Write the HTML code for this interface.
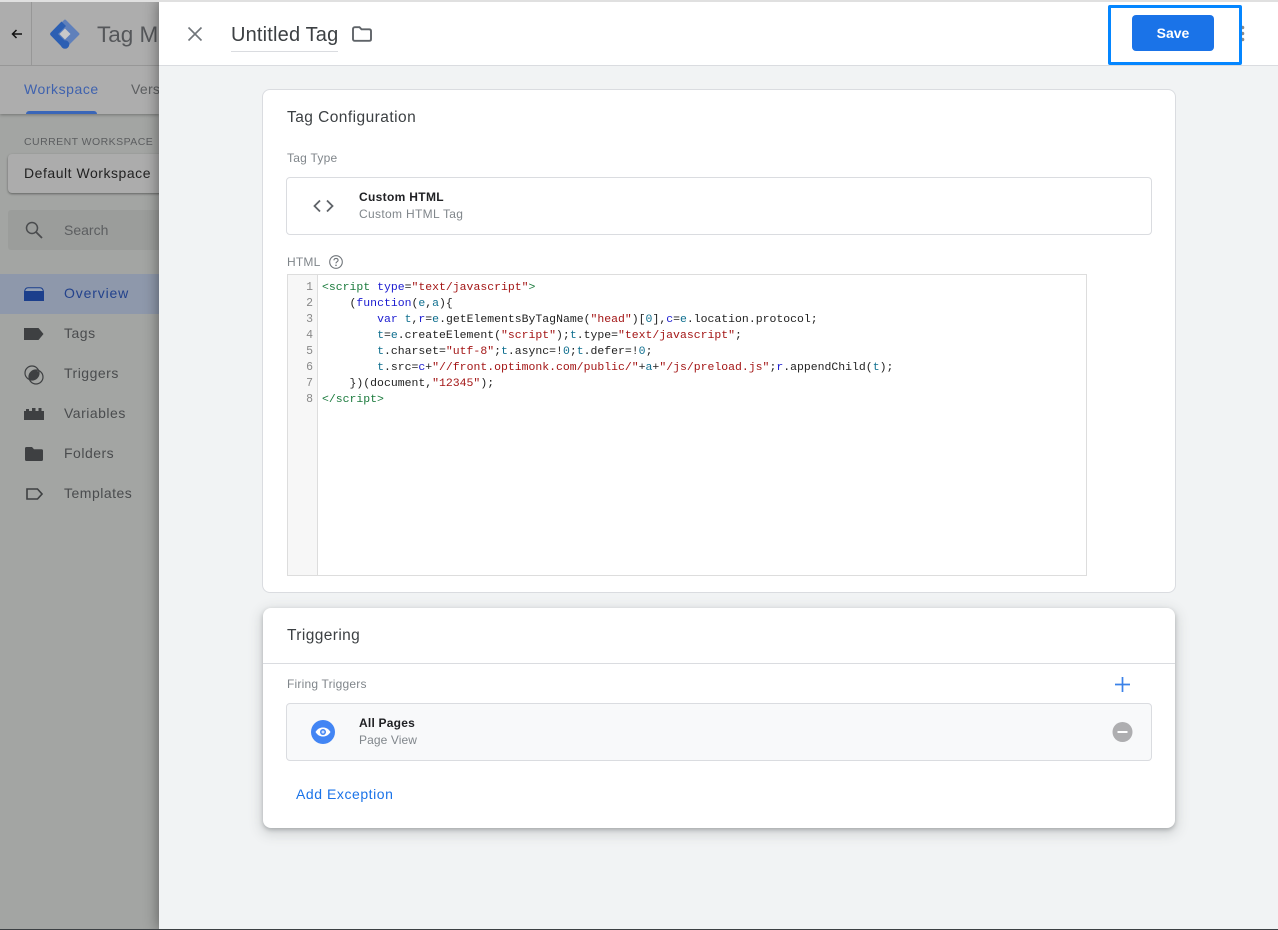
<!DOCTYPE html>
<html lang="en">
<head>
<meta charset="utf-8">
<title>Untitled Tag</title>
<style>
html,body{margin:0;padding:0;width:1278px;height:930px;overflow:hidden;background:#a3a5a3;font-family:"Liberation Sans",sans-serif;}
.a{position:absolute;white-space:nowrap;}
#root{position:absolute;left:0;top:0;width:1278px;height:930px;overflow:hidden;}
.nav{font-size:14px;color:#4a4c4e;left:64px;letter-spacing:.5px;}
.code{font-family:"Liberation Mono",monospace;font-size:11.47px;line-height:16px;color:#222;white-space:pre;}
.ln{font-family:"Liberation Mono",monospace;font-size:11.5px;line-height:16px;color:#8a8a8a;text-align:right;width:25px;left:288px;top:280px;white-space:pre;}
.t{color:#1a7a3c}.k{color:#1a1ad0}.s{color:#a31515}.n{color:#0f6f8f}.v{color:#1a5fb0}
</style>
</head>
<body>
<div id="root">
  <!-- background app -->
  <div class="a" style="left:0;top:0;width:159px;height:930px;background:#a3a5a3"></div>
  <div class="a" style="left:0;top:2px;width:159px;height:112px;background:#adadad;box-shadow:0 1px 3px rgba(0,0,0,.3)"></div>
  <div class="a" style="left:0;top:65px;width:159px;height:1px;background:#979797"></div>
  <div class="a" style="left:31px;top:2px;width:1px;height:63px;background:#979797"></div>
  <svg class="a" style="left:9px;top:26px" width="16" height="16" viewBox="0 0 16 16"><path d="M13 8H3.500M7.500 4L3.500 8l4 4" fill="none" stroke="#111" stroke-width="1.500"/></svg>
  <svg class="a" style="left:50px;top:19px" width="30" height="30" viewBox="0 0 30 30">
    <path d="M15 1.500L28.500 15 15 28.500 1.500 15z" fill="#5f80bb" stroke="#5f80bb" stroke-width="2" stroke-linejoin="round"/>
    <path d="M11.500 2.500L.8 13.500a2 2 0 0 0 0 3L11.500 27.500 16 23 8 15 16 7z" fill="#2c5fb3"/>
    <path d="M15 9.500l5.500 5.500L15 20.500 9.500 15z" fill="#c9c9c9"/>
    <circle cx="15" cy="25.500" r="4.300" fill="#2c5fb3"/>
  </svg>
  <div class="a" style="left:97px;top:21px;font-size:22.5px;line-height:28px;color:#55575a">Tag Ma</div>
  <div class="a" style="left:24px;top:81px;font-size:14px;line-height:17px;letter-spacing:.55px;color:#3f62ae">Workspace</div>
  <div class="a" style="left:131px;top:81px;font-size:14px;line-height:17px;letter-spacing:.3px;color:#5c5e60">Vers</div>
  <div class="a" style="left:26px;top:111px;width:71px;height:3px;background:#3a66b8;border-radius:3px 3px 0 0"></div>
  <div class="a" style="left:24px;top:136px;font-size:10.5px;line-height:13px;letter-spacing:.45px;color:#5c5e60">CURRENT WORKSPACE</div>
  <div class="a" style="left:8px;top:154px;width:160px;height:39px;background:#acacac;border-radius:4px;box-shadow:0 1px 2px rgba(0,0,0,.4)"></div>
  <div class="a" style="left:24px;top:165px;font-size:14px;line-height:17px;letter-spacing:.53px;color:#222">Default Workspace</div>
  <div class="a" style="left:8px;top:210px;width:160px;height:40px;background:#9b9d9b;border-radius:3px"></div>
  <svg class="a" style="left:24px;top:220px" width="20" height="20" viewBox="0 0 20 20"><circle cx="8" cy="8" r="5.500" fill="none" stroke="#4a4c4e" stroke-width="1.500"/><path d="M12 12l6 6" stroke="#4a4c4e" stroke-width="1.800"/></svg>
  <div class="a" style="left:64px;top:222px;font-size:14px;line-height:17px;color:#5c5e60">Search</div>

  <div class="a" style="left:0;top:274px;width:159px;height:40px;background:#8e98ab"></div>
  <svg class="a" style="left:24px;top:287px" width="20" height="14" viewBox="0 0 20 14"><path d="M0.500 4.500C1 2 2 0.700 4 0.700h12c2 0 3 1.300 3.500 3.800z" fill="#93a0b4" stroke="#1c3f8c" stroke-width="1"/><path d="M0 5h20v9H0z" fill="#1c3f8c"/></svg>
  <div class="a nav" style="top:285px;line-height:17px;letter-spacing:.85px;color:#23428c">Overview</div>
  <svg class="a" style="left:24px;top:328px" width="20" height="12" viewBox="0 0 20 12"><path d="M0 0h14.500L19.500 6 14.500 12H0z" fill="#3e4042"/></svg>
  <div class="a nav" style="top:325px;line-height:17px">Tags</div>
  <svg class="a" style="left:24px;top:365px" width="20" height="20" viewBox="0 0 20 20"><circle cx="8" cy="8" r="7" fill="none" stroke="#3e4042" stroke-width="1.200"/><circle cx="12" cy="12" r="7" fill="none" stroke="#3e4042" stroke-width="1.200"/><path d="M12.500 5.200A7 7 0 0 1 15 8 7 7 0 0 1 5.200 14.500 7 7 0 0 1 5.200 12 7 7 0 0 1 12.500 5.200z" fill="#3e4042"/></svg>
  <div class="a nav" style="top:365px;line-height:17px">Triggers</div>
  <svg class="a" style="left:24px;top:408px" width="20" height="12" viewBox="0 0 20 12"><path d="M0 12V3h2V1h3v2h3V0h3.500v3H14.500V0h3v3H20v9z" fill="#3e4042"/></svg>
  <div class="a nav" style="top:405px;line-height:17px">Variables</div>
  <svg class="a" style="left:25px;top:447px" width="18" height="14" viewBox="0 0 18 14"><path d="M0 1.500C0 .5.500 0 1.500 0H7l2 2.200h7.500c1 0 1.500.5 1.500 1.500v8.800c0 1-.5 1.500-1.500 1.500h-15C.5 14 0 13.500 0 12.500z" fill="#3e4042"/></svg>
  <div class="a nav" style="top:445px;line-height:17px">Folders</div>
  <svg class="a" style="left:26px;top:488px" width="17" height="12" viewBox="0 0 17 12"><path d="M1 1h10.500L16 6l-4.500 5H1z" fill="none" stroke="#3e4042" stroke-width="1.600"/></svg>
  <div class="a nav" style="top:485px;line-height:17px">Templates</div>

  <!-- panel -->
  <div class="a" style="left:159px;top:0;width:1119px;height:930px;background:#f1f3f4;box-shadow:0 0 14px rgba(0,0,0,.45)"></div>
  <div class="a" style="left:159px;top:2px;width:1119px;height:63px;background:#fff;border-bottom:1px solid #dadce0"></div>
  <div class="a" style="left:0;top:0;width:1278px;height:2px;background:#e0e0e0"></div>
  <div class="a" style="left:0;top:929px;width:1278px;height:1px;background:#3c4043"></div>

  <svg class="a" style="left:187px;top:26px" width="16" height="16" viewBox="0 0 16 16"><path d="M1.500 1.500l13 13M14.500 1.500l-13 13" stroke="#70757a" stroke-width="1.600" fill="none"/></svg>
  <div class="a" style="left:231px;top:21px;font-size:20px;line-height:28px;letter-spacing:.18px;color:#3c4043">Untitled Tag</div>
  <div class="a" style="left:231px;top:51px;width:107px;height:1px;background:#dadce0"></div>
  <svg class="a" style="left:352px;top:26px" width="20" height="16" viewBox="0 0 20 16"><path d="M1 3c0-1 .6-1.800 1.800-1.800H7.500L9.500 3.300h7.700c1.100 0 1.800.7 1.800 1.800v8c0 1-.7 1.700-1.800 1.700H2.800C1.600 14.800 1 14.100 1 13.100z" fill="none" stroke="#5f6368" stroke-width="1.900"/></svg>

  <!-- save -->
  <svg class="a" style="left:1240px;top:25px" width="5" height="17" viewBox="0 0 5 17"><circle cx="2.500" cy="2.500" r="1.800" fill="#8a8a8a"/><circle cx="2.500" cy="8.500" r="1.800" fill="#8a8a8a"/><circle cx="2.500" cy="14.500" r="1.800" fill="#8a8a8a"/></svg>
  <div class="a" style="left:1108px;top:5px;width:128px;height:54px;border:3px solid #0486ff;border-radius:2px"></div>
  <div class="a" style="left:1132px;top:15px;width:82px;height:36px;background:#1a73e8;border-radius:4px;color:#fff;font-size:14px;font-weight:bold;line-height:36px;text-align:center">Save</div>

  <!-- tag config card -->
  <div class="a" style="left:262px;top:89px;width:912px;height:502px;background:#fff;border:1px solid #dadce0;border-radius:8px"></div>
  <div class="a" style="left:287px;top:108px;font-size:15.5px;line-height:19px;letter-spacing:.45px;color:#3c4043">Tag Configuration</div>
  <div class="a" style="left:287px;top:151px;font-size:12px;line-height:14px;letter-spacing:.25px;color:#80868b">Tag Type</div>
  <div class="a" style="left:286px;top:177px;width:864px;height:56px;background:#fff;border:1px solid #dadce0;border-radius:4px"></div>
  <svg class="a" style="left:313px;top:199px" width="21" height="14" viewBox="0 0 21 14"><path d="M7 1.500L1.500 7 7 12.500M14 1.500L19.500 7 14 12.500" fill="none" stroke="#5f6368" stroke-width="1.800"/></svg>
  <div class="a" style="left:359px;top:190px;font-size:12px;font-weight:bold;line-height:15px;letter-spacing:.33px;color:#202124">Custom HTML</div>
  <div class="a" style="left:359px;top:207px;font-size:12px;line-height:14px;letter-spacing:.33px;color:#80868b">Custom HTML Tag</div>

  <div class="a" style="left:287px;top:255px;font-size:12px;line-height:14px;letter-spacing:.2px;color:#80868b">HTML</div>
  <svg class="a" style="left:328px;top:254px" width="16" height="16" viewBox="0 0 16 16"><circle cx="8" cy="8" r="6.300" fill="none" stroke="#70757a" stroke-width="1.100"/><path d="M5.900 6.300C6 5 6.900 4.400 8 4.400c1.200 0 2.100.7 2.100 1.800 0 1.500-2.100 1.500-2.100 3.200" fill="none" stroke="#70757a" stroke-width="1.100"/><circle cx="8" cy="11.300" r=".8" fill="#70757a"/></svg>

  <div class="a" style="left:287px;top:274px;width:798px;height:300px;background:#fff;border:1px solid #ddd"></div>
  <div class="a" style="left:288px;top:275px;width:29px;height:300px;background:#f7f7f7;border-right:1px solid #ddd"></div>
  <div class="a ln">1
2
3
4
5
6
7
8</div>
  <div class="a code" style="left:322px;top:280px"><span class="t">&lt;script</span> <span class="k">type</span>=<span class="s">"text/javascript"</span><span class="t">&gt;</span>
    (<span class="k">function</span>(<span class="n">e</span>,<span class="n">a</span>){
        <span class="k">var</span> <span class="n">t</span>,<span class="k">r</span>=<span class="n">e</span>.getElementsByTagName(<span class="s">"head"</span>)[<span class="n">0</span>],<span class="k">c</span>=<span class="n">e</span>.location.protocol;
        <span class="n">t</span>=<span class="n">e</span>.createElement(<span class="s">"script"</span>);<span class="n">t</span>.type=<span class="s">"text/javascript"</span>;
        <span class="n">t</span>.charset=<span class="s">"utf-8"</span>;<span class="n">t</span>.async=!<span class="n">0</span>;<span class="n">t</span>.defer=!<span class="n">0</span>;
        <span class="n">t</span>.src=<span class="k">c</span>+<span class="s">"//front.optimonk.com/public/"</span>+<span class="n">a</span>+<span class="s">"/js/preload.js"</span>;<span class="k">r</span>.appendChild(<span class="n">t</span>);
    })(document,<span class="s">"12345"</span>);
<span class="t">&lt;/script&gt;</span></div>

  <!-- triggering card -->
  <div class="a" style="left:263px;top:608px;width:912px;height:220px;background:#fff;border-radius:8px;box-shadow:0 2px 4px rgba(60,64,67,.3),0 4px 12px 3px rgba(60,64,67,.15)"></div>
  <div class="a" style="left:287px;top:626px;font-size:15.5px;line-height:19px;letter-spacing:.4px;color:#3c4043">Triggering</div>
  <div class="a" style="left:263px;top:663px;width:912px;height:1px;background:#dadce0"></div>
  <div class="a" style="left:287px;top:677px;font-size:12px;line-height:14px;letter-spacing:.2px;color:#80868b">Firing Triggers</div>
  <svg class="a" style="left:1115px;top:677px" width="15" height="15" viewBox="0 0 15 15"><path d="M0 7.500h15M7.500 0v15" stroke="#3b82e8" stroke-width="1.700"/></svg>
  <div class="a" style="left:286px;top:703px;width:864px;height:56px;background:#f8f9fa;border:1px solid #dadce0;border-radius:4px"></div>
  <svg class="a" style="left:311px;top:720px" width="24" height="24" viewBox="0 0 24 24"><circle cx="12" cy="12" r="12" fill="#4285f4"/><path d="M4.500 12C6.500 8.800 9 7.500 12 7.500s5.500 1.300 7.500 4.500c-2 3.200-4.500 4.500-7.500 4.500S6.500 15.200 4.500 12z" fill="#fff"/><circle cx="12" cy="12" r="3" fill="#4285f4"/><circle cx="12" cy="12" r="1.500" fill="#cfe0fc"/></svg>
  <div class="a" style="left:359px;top:716px;font-size:12px;font-weight:bold;line-height:15px;letter-spacing:.22px;color:#202124">All Pages</div>
  <div class="a" style="left:359px;top:733px;font-size:12px;line-height:14px;letter-spacing:.1px;color:#80868b">Page View</div>
  <svg class="a" style="left:1112px;top:722px" width="21" height="20" viewBox="0 0 21 20"><circle cx="10.500" cy="10" r="10" fill="#aeaeb0"/><path d="M5.500 10h10" stroke="#fff" stroke-width="2"/></svg>
  <div class="a" style="left:296px;top:785px;font-size:14px;line-height:18px;letter-spacing:.55px;color:#1a73e8">Add Exception</div>
</div>
</body>
</html>
